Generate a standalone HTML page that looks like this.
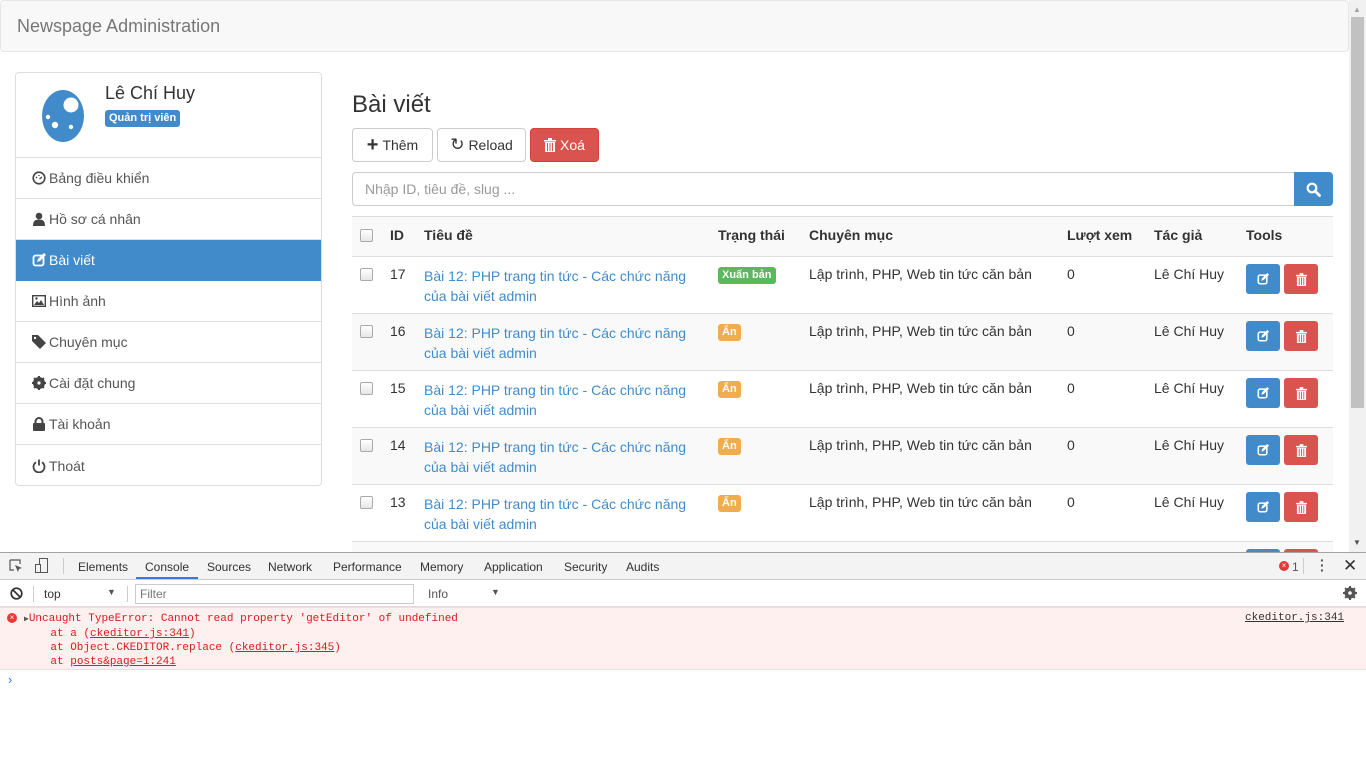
<!DOCTYPE html>
<html><head><meta charset="utf-8"><style>
*{box-sizing:border-box;margin:0;padding:0}
body{width:1366px;height:768px;overflow:hidden;font-family:"Liberation Sans",Arial,sans-serif;font-size:14px;color:#333;background:#fff;position:relative}
.a{position:absolute}
.nav{left:0;top:0;width:1349px;height:52px;background:#f8f8f8;border:1px solid #e7e7e7;border-radius:4px}
.nav span{position:absolute;left:16px;top:15px;font-size:18px;color:#777}
.side{left:15px;top:72px;width:307px;height:414px;border:1px solid #ddd;border-radius:4px;overflow:hidden}
.prof{height:85px;border-bottom:1px solid #ddd;position:relative}
.item{height:41px;border-bottom:1px solid #ddd;padding:12px 0 0 16px;color:#555;font-size:14px;display:flex;align-items:center;gap:3px;height:41px;padding-top:0}
.item:last-child{border-bottom:none}
.item.act{background:#428bca;color:#fff;border-color:#428bca}
.item svg{width:14px;height:14px}
.btn{height:34px;border:1px solid #ccc;border-radius:4px;background:#fff;font-size:14px;display:flex;align-items:center;justify-content:center;gap:4px;color:#333}
.th{font-weight:bold;color:#333}
.row{left:352px;width:981px;height:57px;border-top:1px solid #ddd}
.cb{width:13px;height:13px;border:1px solid #aaa;border-radius:2px;background:linear-gradient(#fff,#e6e6e6)}
.lbl{font-size:11px;font-weight:bold;color:#fff;padding:2px 4px;border-radius:3px;line-height:13px}
.ib{width:34px;height:30px;border-radius:3px;display:flex;align-items:center;justify-content:center}
.dt{font-size:12px;color:#333}
.mono{font-family:"Liberation Mono",monospace;font-size:11px;color:#d81b1b}
</style></head><body>
<div class="a nav"><span>Newspage Administration</span></div>

<div class="a side">
 <div class="prof">
  <svg class="a" style="left:25px;top:16px" width="44" height="54" viewBox="0 0 44 54"><ellipse cx="22" cy="27" rx="21" ry="26" fill="#428bca"/><circle cx="30" cy="16" r="7.5" fill="#fff"/><circle cx="7" cy="28" r="2.2" fill="#fff"/><circle cx="14" cy="36" r="3.2" fill="#fff"/><circle cx="30" cy="38" r="2.2" fill="#fff"/></svg>
  <div class="a" style="left:89px;top:10px;font-size:18px;color:#333">Lê Chí Huy</div>
  <div class="a lbl" style="left:89px;top:37px;background:#428bca;font-size:11px">Quản trị viên</div>
 </div>
 <div class="item"><svg viewBox="0 0 14 14"><circle cx="7" cy="7" r="5.8" fill="none" stroke="#444" stroke-width="1.6"/><path d="M4 6l1 1M7 4v1M10 6l-2.5 2" stroke="#444" stroke-width="1.3"/></svg>Bảng điều khiển</div>
 <div class="item"><svg viewBox="0 0 14 14"><circle cx="7" cy="4" r="3.3" fill="#444"/><path d="M1 14c0-5 2-6.5 6-6.5s6 1.5 6 6.5z" fill="#444"/></svg>Hồ sơ cá nhân</div>
 <div class="item act"><svg viewBox="0 0 14 14"><rect x="1.5" y="2.5" width="10" height="10" rx="2" fill="none" stroke="#fff" stroke-width="1.8"/><path d="M5 9l1-3 6-6 2 2-6 6z" fill="#fff"/></svg>Bài viết</div>
 <div class="item"><svg viewBox="0 0 14 14"><rect x="0.7" y="1.7" width="12.6" height="10.6" fill="none" stroke="#444" stroke-width="1.4"/><path d="M2 11l3-4 2 2 2-3 3 5z" fill="#444"/><circle cx="4.5" cy="4.5" r="1.2" fill="#444"/></svg>Hình ảnh</div>
 <div class="item"><svg viewBox="0 0 14 14"><path d="M0 0h6l8 8-6 6-8-8z" fill="#444"/><circle cx="3" cy="3" r="1.2" fill="#fff"/></svg>Chuyên mục</div>
 <div class="item"><svg viewBox="0 0 14 14"><circle cx="7" cy="7" r="4.5" fill="none" stroke="#444" stroke-width="3"/><path d="M6 0h2v14H6zM0 6h14v2H0z" fill="#444" transform="rotate(0 7 7)"/><path d="M6 0h2v14H6zM0 6h14v2H0z" fill="#444" transform="rotate(45 7 7)"/><circle cx="7" cy="7" r="1.6" fill="#fff"/></svg>Cài đặt chung</div>
 <div class="item"><svg viewBox="0 0 14 14"><rect x="1" y="6" width="12" height="8" rx="1" fill="#444"/><path d="M3.5 6V4.5a3.5 3.5 0 017 0V6" fill="none" stroke="#444" stroke-width="2"/></svg>Tài khoản</div>
 <div class="item"><svg viewBox="0 0 14 14"><path d="M4 3.3A5.5 5.5 0 1010 3.3" fill="none" stroke="#444" stroke-width="1.8"/><path d="M7 0.5v6" stroke="#444" stroke-width="1.8"/></svg>Thoát</div>
</div>

<div class="a" style="left:352px;top:91px;font-size:24px;color:#333">Bài viết</div>
<div class="a btn" style="left:352px;top:128px;width:81px"><b style="font-size:20px;line-height:14px">+</b>Thêm</div>
<div class="a btn" style="left:437px;top:128px;width:89px"><span style="font-size:17px">↻</span>Reload</div>
<div class="a btn" style="left:530px;top:128px;width:69px;background:#d9534f;border-color:#d43f3a;color:#fff"><svg width="12" height="14" viewBox="0 0 12 14"><path d="M0 2h12v1.5H0zM4 0h4v2H4zM1 4h10v10H1z" fill="#fff"/><path d="M3.5 5v8M6 5v8M8.5 5v8" stroke="#d9534f"/></svg>Xoá</div>
<div class="a" style="left:352px;top:172px;width:943px;height:34px;border:1px solid #ccc;border-radius:4px 0 0 4px;padding:8px 12px;color:#999">Nhập ID, tiêu đề, slug ...</div>
<div class="a" style="left:1294px;top:172px;width:39px;height:34px;background:#428bca;border-radius:0 4px 4px 0"><svg class="a" style="left:12px;top:10px" width="15" height="15" viewBox="0 0 15 15"><circle cx="6" cy="6" r="4.3" fill="none" stroke="#fff" stroke-width="2.2"/><path d="M9 9l4.5 4.5" stroke="#fff" stroke-width="2.8" stroke-linecap="round"/></svg></div>

<div class="a" style="left:352px;top:216px;width:981px;height:40px;background:#f9f9f9;border-top:1px solid #ddd"></div>
<div class="a cb" style="left:360px;top:229px"></div>
<div class="a th" style="left:390px;top:227px">ID</div>
<div class="a th" style="left:424px;top:227px">Tiêu đề</div>
<div class="a th" style="left:718px;top:227px">Trạng thái</div>
<div class="a th" style="left:809px;top:227px">Chuyên mục</div>
<div class="a th" style="left:1067px;top:227px">Lượt xem</div>
<div class="a th" style="left:1154px;top:227px">Tác giả</div>
<div class="a th" style="left:1246px;top:227px">Tools</div>

<div id="rows"></div>
<script>
var ids=[17,16,15,14,13,12],h='';
ids.forEach(function(id,i){var t=256+57*i;var bg=i%2?'#f9f9f9':'#fff';
h+='<div class="a row" style="top:'+t+'px;background:'+bg+'"></div>';
if(i<5){
h+='<div class="a cb" style="left:360px;top:'+(t+12)+'px"></div>';
h+='<div class="a" style="left:390px;top:'+(t+10)+'px">'+id+'</div>';
h+='<div class="a" style="left:424px;top:'+(t+10)+'px;color:#428bca;line-height:20px;width:280px">Bài 12: PHP trang tin tức - Các chức năng<br>của bài viết admin</div>';
h+=i==0?'<div class="a lbl" style="left:718px;top:'+(t+11)+'px;background:#5cb85c">Xuấn bản</div>':'<div class="a lbl" style="left:718px;top:'+(t+11)+'px;background:#f0ad4e">Ẩn</div>';
h+='<div class="a" style="left:809px;top:'+(t+10)+'px">Lập trình, PHP, Web tin tức căn bản</div>';
h+='<div class="a" style="left:1067px;top:'+(t+10)+'px">0</div>';
h+='<div class="a" style="left:1154px;top:'+(t+10)+'px">Lê Chí Huy</div>';}
h+='<div class="a ib" style="left:1246px;top:'+(t+8)+'px;background:#428bca"><svg width="12" height="12" viewBox="0 0 14 14"><rect x="1.5" y="2.5" width="10" height="10" rx="2" fill="none" stroke="#fff" stroke-width="1.8"/><path d="M5 9l1-3 6-6 2 2-6 6z" fill="#fff"/></svg></div>';
h+='<div class="a ib" style="left:1284px;top:'+(t+8)+'px;background:#d9534f"><svg width="11" height="13" viewBox="0 0 12 14"><path d="M0 2h12v1.5H0zM4 0h4v2H4zM1 4h10v10H1z" fill="#fff"/><path d="M3.5 5v8M6 5v8M8.5 5v8" stroke="#d9534f"/></svg></div>';
});
document.getElementById('rows').innerHTML=h;
</script>

<!-- scrollbar -->
<div class="a" style="left:1349px;top:0;width:17px;height:552px;background:#f1f1f1"></div>
<div class="a" style="left:1351px;top:17px;width:13px;height:391px;background:#c1c1c1"></div>
<div class="a" style="left:1353px;top:5px;font-size:8px;color:#a3a3a3">▲</div>
<div class="a" style="left:1353px;top:538px;font-size:8px;color:#505050">▼</div>

<!-- devtools -->
<div class="a" style="left:0;top:552px;width:1366px;height:216px;background:#fff;border-top:1px solid #a3a3a3"></div>
<div class="a" style="left:0;top:553px;width:1366px;height:27px;background:#f3f3f3;border-bottom:1px solid #ccc"></div>
<svg class="a" style="left:9px;top:559px" width="14" height="14" viewBox="0 0 14 14"><path d="M1 1h10v4M1 1v10h4" fill="none" stroke="#555" stroke-width="1.2"/><path d="M6 6l7 3-3 1-1 3z" fill="#555"/></svg>
<svg class="a" style="left:34px;top:558px" width="16" height="16" viewBox="0 0 16 16"><rect x="5.5" y="0.5" width="8" height="14" fill="none" stroke="#555"/><rect x="1.5" y="6.5" width="5" height="8" fill="#f3f3f3" stroke="#555"/></svg>
<div class="a" style="left:63px;top:558px;width:1px;height:16px;background:#ccc"></div>
<div class="a dt" style="left:78px;top:560px;color:#333">Elements</div>
<div class="a dt" style="left:145px;top:560px;color:#333">Console</div>
<div class="a" style="left:136px;top:577px;width:62px;height:2px;background:#3879d9"></div>
<div class="a dt" style="left:207px;top:560px">Sources</div>
<div class="a dt" style="left:268px;top:560px">Network</div>
<div class="a dt" style="left:333px;top:560px">Performance</div>
<div class="a dt" style="left:420px;top:560px">Memory</div>
<div class="a dt" style="left:484px;top:560px">Application</div>
<div class="a dt" style="left:564px;top:560px">Security</div>
<div class="a dt" style="left:626px;top:560px">Audits</div>
<div class="a" style="left:1279px;top:561px;width:10px;height:10px;border-radius:50%;background:#e53935;color:#fff;font-size:8px;line-height:10px;text-align:center">×</div>
<div class="a dt" style="left:1292px;top:560px;color:#555">1</div>
<div class="a" style="left:1303px;top:558px;width:1px;height:16px;background:#ccc"></div>
<div class="a" style="left:1320px;top:558px;font-size:14px;font-weight:bold;color:#555;line-height:5px;width:4px">·<br>·<br>·</div>
<div class="a" style="left:1343px;top:556px;font-size:17px;color:#333">✕</div>

<div class="a" style="left:0;top:580px;width:1366px;height:27px;border-bottom:1px solid #ddd"></div>
<svg class="a" style="left:10px;top:587px" width="13" height="13" viewBox="0 0 13 13"><circle cx="6.5" cy="6.5" r="5.3" fill="none" stroke="#333" stroke-width="1.7"/><path d="M3 3l7 7" stroke="#333" stroke-width="1.7"/></svg>
<div class="a" style="left:33px;top:586px;width:1px;height:16px;background:#ccc"></div>
<div class="a dt" style="left:44px;top:587px">top</div>
<div class="a" style="left:107px;top:587px;font-size:9px;color:#555">▼</div>
<div class="a" style="left:127px;top:586px;width:1px;height:16px;background:#ccc"></div>
<div class="a" style="left:135px;top:584px;width:279px;height:20px;border:1px solid #ccc"></div>
<div class="a dt" style="left:140px;top:587px;color:#777">Filter</div>
<div class="a dt" style="left:428px;top:587px;color:#555">Info</div>
<div class="a" style="left:491px;top:587px;font-size:9px;color:#555">▼</div>
<svg class="a" style="left:1343px;top:586px" width="14" height="14" viewBox="0 0 14 14"><circle cx="7" cy="7" r="4.2" fill="none" stroke="#555" stroke-width="2.8"/><path d="M6 0h2v14H6zM0 6h14v2H0z" fill="#555"/><path d="M6 0h2v14H6zM0 6h14v2H0z" fill="#555" transform="rotate(45 7 7)"/><circle cx="7" cy="7" r="1.8" fill="#fff"/></svg>

<div class="a" style="left:0;top:607px;width:1366px;height:63px;background:#fff0f0;border-top:1px solid #ffd6d6;border-bottom:1px solid #ffd6d6"></div>
<div class="a" style="left:7px;top:613px;width:10px;height:10px;border-radius:50%;background:#e53935;color:#fff;font-size:8px;line-height:10px;text-align:center">×</div>
<div class="a mono" style="left:24px;top:612px;line-height:14px;white-space:pre"><span style="font-size:8px;color:#555">▶</span>Uncaught TypeError: Cannot read property 'getEditor' of undefined
    at a (<u>ckeditor.js:341</u>)
    at Object.CKEDITOR.replace (<u>ckeditor.js:345</u>)
    at <u>posts&amp;page=1:241</u></div>
<div class="a mono" style="left:1245px;top:612px;color:#333"><u>ckeditor.js:341</u></div>
<div class="a" style="left:8px;top:672px;font-size:13px;color:#3879d9">›</div>
</body></html>
